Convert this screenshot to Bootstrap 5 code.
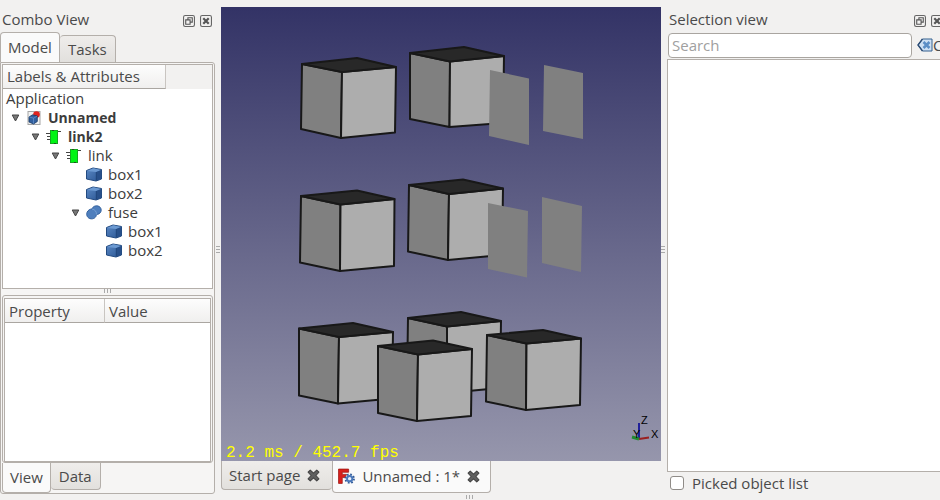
<!DOCTYPE html>
<html lang="en">
<head>
<meta charset="utf-8">
<meta name="viewport" content="width=device-width, initial-scale=1">
<title>Unnamed : 1*</title>
<link href="https://cdn.jsdelivr.net/npm/bootstrap@5.3.0/dist/css/bootstrap.min.css" rel="stylesheet">
<style>
  :root { --ink: #4a4a4a; --line: #b4afaa; --win: #f2f1f0; }
  body { background: var(--win); color: var(--ink); font-family: "Open Sans", "Noto Sans", sans-serif; font-size: 15px; line-height: 19px; }
  svg { display: block; flex: none; }
  button { color: inherit; }
  .plain-btn { border: 0; background: none; padding: 0; }
  .docks { min-height: 0; }
  .left-dock { flex: 0 0 215px; }
  .right-dock { flex: 0 0 273px; }
  .right-inner { width: 276px; }
  .dock-title { height: 32px; padding: 9px 3px 0 2px; }
  .dock-title h2 { font-size: 15px; line-height: 21px; font-weight: 400; margin: 0; }
  .dock-title .tools { gap: 5px; }
  .ui-tab { border: 1px solid var(--line); background: linear-gradient(#efedeb, #e2e0dd); padding: 0 8px; white-space: nowrap; }
  .ui-tab.on { background: #fafafa; z-index: 1; }
  .top-tab { border-radius: 4px 4px 0 0; border-bottom: 0; height: 27px; }
  .top-tab.on { height: 30px; padding: 0 7px; }
  .low-tab { border-radius: 0 0 4px 4px; border-top: 0; height: 27px; }
  .low-tab.on { height: 30px; padding: 0 7px; }
  .pane { border: 1px solid var(--line); border-radius: 0 3px 3px 3px; background: #f6f5f4; padding: 1px 0 0 1px; margin-bottom: 1px; }
  .tree-box { flex: 227 1 0; border: 1px solid var(--line); background: #fff; margin-right: 1px; }
  .head-row { height: 24px; background: #f2f1f0; }
  .head-cell { background: linear-gradient(#fdfdfd, #f0efee); border-right: 1px solid #c9c5c1; border-bottom: 1px solid #aaa6a1; padding: 2px 4px 0; font-weight: 400; }
  .tree-head { width: 163px; }
  .tree-row { height: 19px; gap: 6px; color: #3c3c3c; }
  .tree-row.fw-bold { font-size: 14px; }
  .d0 { padding-left: 3px; } .d1 { padding-left: 8px; } .d2 { padding-left: 28px; } .d3 { padding-left: 48px; }
  .d4 { padding-left: 83px; } .d4f { padding-left: 68px; } .d5 { padding-left: 103px; }
  .grip-h { height: 6px; }
  .prop-box { flex: 167 1 0; border: 1px solid var(--line); border-radius: 3px; padding: 2px 1px 0; background: #f6f5f4; margin-right: 1px; }
  .prop-fill { border: 1px solid var(--line); background: #fff; }
  .prop-fill table { width: 100%; table-layout: fixed; border-collapse: separate; border-spacing: 0; }
  .prop-fill th { height: 24px; }
  .prop-fill th:first-child { width: 100px; }
  .prop-fill th:last-child { border-right: 0; }
  .grip-v { flex: 0 0 6px; padding-top: 5px; }
  .stage { margin-top: 7px; background: linear-gradient(#333366, #9696ac); }
  .stage svg { width: 100%; height: 100%; }
  .fps { font: 16px "Liberation Mono", monospace; fill: #ffff00; }
  .axis { font: 11px "Liberation Sans", sans-serif; fill: #000; }
  .doc-tabs { height: 34px; }
  .doc-tab { height: 29px; gap: 7px; padding: 0 12px 0 7px; }
  .doc-tab.on { height: 32px; padding: 0 10px 0 5px; }
  .search { width: 244px; height: 25px; border: 1px solid #a9a5a0; border-radius: 4px; padding: 0 3px; font-size: 15px; background: #fff; color: var(--ink); }
  .search::placeholder { color: #a0a0a0; opacity: 1; }
  .search-row { height: 27px; gap: 5px; padding: 0 0 1px 1px; }
  .result { border: 1px solid var(--line); background: #fff; }
  .pick-row { height: 23px; padding: 0 0 1px 3px; gap: 8px; }
  .pick-row .form-check-input { width: 14px; height: 14px; margin: 0; border: 1px solid #908c88; border-radius: 3px; }
</style>
<script src="https://cdn.jsdelivr.net/npm/bootstrap@5.3.0/dist/js/bootstrap.bundle.min.js"></script>
</head>
<body class="vh-100 overflow-hidden d-flex flex-column">
<svg width="0" height="0" class="position-absolute" aria-hidden="true">
  <defs>
    <linearGradient id="blue" x1="0" y1="0" x2="1" y2="1"><stop offset="0" stop-color="#5a88c4"/><stop offset="1" stop-color="#2a5592"/></linearGradient>
    <symbol id="i-float" viewBox="0 0 11 11"><rect x=".5" y=".5" width="10" height="10" rx="1.5" fill="none" stroke="#666"/><path d="M4.500 4.500V2.500H8.500V6.500H6.500M2.500 4.500H6.500V8.500H2.500Z" fill="none" stroke="#555"/></symbol>
    <symbol id="i-close" viewBox="0 0 11 11"><rect x=".5" y=".5" width="10" height="10" rx="1.5" fill="none" stroke="#666"/><path d="M3 3L8 8M8 3L3 8" stroke="#555" stroke-width="2"/></symbol>
    <symbol id="i-arrow" viewBox="0 0 8 8"><path d="M.7 1H7.300L4 7Z" fill="#777" stroke="#444"/></symbol>
    <symbol id="i-doc" viewBox="0 0 15 16"><rect x="1.500" y="1.500" width="12" height="13" fill="#f1f2f2" stroke="#a5a5a5"/><circle cx="10" cy="4.500" r="3.300" fill="#e1231f"/><path d="M2.500 7L6 4.800L10.800 6V11.500L7 14L2.500 12Z" fill="#315f9e" stroke="#183963" stroke-width=".8"/><path d="M2.800 7L7 8.200L10.500 6.200M7 8.200V13.500" fill="none" stroke="#6996d1" stroke-width=".7"/></symbol>
    <symbol id="i-link" viewBox="0 0 16 16"><path d="M0 4.500H4M1 7.500H4M1 10.500H4M12 2.500H15" stroke="#444" stroke-width="1.200"/><rect x="4.500" y="1.500" width="7" height="13" fill="#00f414" stroke="#14a81e"/><path d="M6 1.500H8M10 14.500H8" stroke="#205020"/></symbol>
    <symbol id="i-box" viewBox="0 0 16 15"><path d="M.5 3.500L7 1L15.500 2.500V12L10 14L.5 12Z" fill="url(#blue)" stroke="#234a80"/><path d="M1 4L10 5L15 3L7.500 1.300Z" fill="#6c9ad2"/><path d="M10.500 5L15.300 3V11.800L10.500 13.500Z" fill="#28508a"/><path d="M10.300 5V13.500" stroke="#163a6b" stroke-width=".7"/></symbol>
    <symbol id="i-fuse" viewBox="0 0 16 15"><path d="M6 4C7 1 10 .5 12 1C15.500 2 16 6 14 8C13 9 11.500 9.500 10.500 9.500C10 13 7.500 14 5 13.800C1.500 13.500 0 10 1 7.500C2 5 4 4 6 4Z" fill="#4f7fbd" stroke="#315f9c"/><path d="M6 4C9 4.500 10.500 6.500 10.500 9.500" fill="none" stroke="#7ba5d8" stroke-width=".8"/></symbol>
    <symbol id="i-x" viewBox="0 0 12 12"><path d="M1 3L3 1L6 3.800L9 1L11 3L8.200 6L11 9L9 11L6 8.200L3 11L1 9L3.800 6Z" fill="#606060" stroke="#444" stroke-linejoin="round"/></symbol>
    <symbol id="i-app" viewBox="0 0 16 16"><path d="M.5 1H10V4H4V6H8V9H4V14.500H.5Z" fill="#d8201c" stroke="#9d1512" stroke-width=".7"/><circle cx="11" cy="10" r="4.200" fill="#f6f5f4"/><circle cx="11" cy="10" r="4" fill="none" stroke="#2f5896" stroke-width="1.800" stroke-dasharray="1.600 1.540"/><circle cx="11" cy="10" r="2.500" fill="#e6eefb" stroke="#4a78ba" stroke-width="1.800"/></symbol>
    <symbol id="i-clear" viewBox="0 0 16 14"><path d="M5.500 1H15V13H5.500L1 7Z" fill="#cfe0f3" stroke="#35608f"/><path d="M5.500 1L1 7L5.500 13" fill="none" stroke="#2c4c75" stroke-width="1.400"/><path d="M6.500 4L12.500 10M12.500 4L6.500 10" stroke="#5c8ec6" stroke-width="2.600"/></symbol>
    <symbol id="i-gripx" viewBox="0 0 8 5"><path d="M.5 0V4M3.500 0V4M6.500 0V4" stroke="#aaa"/></symbol>
    <symbol id="i-gripy" viewBox="0 0 5 8"><path d="M0 .5H4M0 3.500H4M0 6.500H4" stroke="#aaa"/></symbol>
  </defs>
</svg>

<div class="docks d-flex flex-grow-1 overflow-hidden">
  <aside class="left-dock d-flex flex-column">
    <header class="dock-title d-flex justify-content-between">
      <h2>Combo View</h2>
      <div class="tools d-flex align-items-center">
        <button class="plain-btn" aria-label="Float"><svg width="12" height="12"><use href="#i-float"/></svg></button>
        <button class="plain-btn" aria-label="Close"><svg width="12" height="12"><use href="#i-close"/></svg></button>
      </div>
    </header>
    <div class="d-flex align-items-end" role="tablist">
      <button class="ui-tab top-tab on" role="tab" aria-selected="true">Model</button>
      <button class="ui-tab top-tab border-start-0" role="tab" aria-selected="false">Tasks</button>
    </div>
    <div class="pane d-flex flex-column flex-grow-1">
      <section class="tree-box">
        <div class="head-row d-flex"><div class="head-cell tree-head">Labels &amp; Attributes</div></div>
        <div role="tree">
          <div class="tree-row d0" role="treeitem">Application</div>
          <div class="tree-row d1 d-flex align-items-center fw-bold" role="treeitem"><svg width="9" height="8"><use href="#i-arrow"/></svg><svg width="16" height="16"><use href="#i-doc"/></svg>Unnamed</div>
          <div class="tree-row d2 d-flex align-items-center fw-bold" role="treeitem"><svg width="9" height="8"><use href="#i-arrow"/></svg><svg width="16" height="16"><use href="#i-link"/></svg>link2</div>
          <div class="tree-row d3 d-flex align-items-center" role="treeitem"><svg width="9" height="8"><use href="#i-arrow"/></svg><svg width="16" height="16"><use href="#i-link"/></svg>link</div>
          <div class="tree-row d4 d-flex align-items-center" role="treeitem"><svg width="16" height="15"><use href="#i-box"/></svg>box1</div>
          <div class="tree-row d4 d-flex align-items-center" role="treeitem"><svg width="16" height="15"><use href="#i-box"/></svg>box2</div>
          <div class="tree-row d4f d-flex align-items-center" role="treeitem"><svg width="9" height="8"><use href="#i-arrow"/></svg><svg width="16" height="15"><use href="#i-fuse"/></svg>fuse</div>
          <div class="tree-row d5 d-flex align-items-center" role="treeitem"><svg width="16" height="15"><use href="#i-box"/></svg>box1</div>
          <div class="tree-row d5 d-flex align-items-center" role="treeitem"><svg width="16" height="15"><use href="#i-box"/></svg>box2</div>
        </div>
      </section>
      <div class="grip-h d-flex justify-content-center align-items-center"><svg width="8" height="5"><use href="#i-gripx"/></svg></div>
      <section class="prop-box d-flex flex-column">
        <div class="prop-fill flex-grow-1">
          <table><thead><tr><th class="head-cell">Property</th><th class="head-cell">Value</th></tr></thead></table>
        </div>
      </section>
      <div class="d-flex align-items-start" role="tablist">
        <button class="ui-tab low-tab on" role="tab" aria-selected="true">View</button>
        <button class="ui-tab low-tab border-start-0" role="tab" aria-selected="false">Data</button>
      </div>
    </div>
  </aside>

  <div class="grip-v d-flex align-items-center justify-content-center"><svg width="5" height="8"><use href="#i-gripy"/></svg></div>

  <main class="d-flex flex-column flex-grow-1 overflow-hidden">
    <div class="stage flex-grow-1 overflow-hidden">
      <svg viewBox="221 7 440 454" role="img" aria-label="3D view">
        <g stroke="#181818" stroke-width="2" stroke-linejoin="round">
          <g>
            <path fill="#808080" d="M410 53L450 61.500L449.500 127L410 119Z"/><path fill="#adadad" d="M450 61.500L504 56L503 123L449.500 127Z"/><path fill="#282828" d="M410 53L464 47L504 56L450 61.500Z"/>
            <path fill="#808080" d="M302 64L342 72L341 138L301 129Z"/><path fill="#adadad" d="M342 72L396 67L395 132.500L341 138Z"/><path fill="#282828" d="M302 64L357 58L396 67L342 72Z"/>
          </g>
          <g>
            <path fill="#808080" d="M409 185L449 194L448 260L408 251.500Z"/><path fill="#adadad" d="M449 194L503 188.500L502 255L448 260Z"/><path fill="#282828" d="M409 185L463 179.500L503 188.500L449 194Z"/>
            <path fill="#808080" d="M301 196L340.500 204.500L340 271L300 262.500Z"/><path fill="#adadad" d="M340.500 204.500L394.500 199L394 266L340 271Z"/><path fill="#282828" d="M301 196L357 190.500L394.500 199L340.500 204.500Z"/>
          </g>
          <g>
            <path fill="#808080" d="M408 318L447 326.500L447 393L407 384Z"/><path fill="#adadad" d="M447 326.500L501 321L500 388L447 393Z"/><path fill="#282828" d="M408 318L461 312L501 321L447 326.500Z"/>
            <path fill="#808080" d="M299 328.500L339 337L338 403.500L299 395.500Z"/><path fill="#adadad" d="M339 337L393 332L392 398.500L338 403.500Z"/><path fill="#282828" d="M299 328.500L353 323L393 332L339 337Z"/>
            <path fill="#808080" d="M487 335L526.500 343.500L526 410L486 401.500Z"/><path fill="#adadad" d="M526.500 343.500L581 338.500L580 405L526 410Z"/><path fill="#282828" d="M487 335L543 330L581 338.500L526.500 343.500Z"/>
            <path fill="#808080" d="M378 346L418 354.500L417 421L378 413Z"/><path fill="#adadad" d="M418 354.500L472 349L471 416L417 421Z"/><path fill="#282828" d="M378 346L433 340.500L472 349L418 354.500Z"/>
          </g>
        </g>
        <path fill="#808080" d="M490 70L529 78.500V145L489 136ZM544 65L583 73V139L543 131ZM488 203L528 211L527 277.500L488 269ZM542 197L582 206L581 272L542 263Z"/>
        <path d="M639 438V423" stroke="#20209a" stroke-width="2"/><path d="M639 439L649 437.500" stroke="#9a2020" stroke-width="2"/><path d="M632 437L639 439" stroke="#208a30" stroke-width="3"/>
        <text class="axis" x="641" y="424">Z</text><text class="axis" x="633" y="438">Y</text><text class="axis" x="651" y="438">X</text>
        <text class="fps" x="226" y="457">2.2 ms / 452.7 fps</text>
      </svg>
    </div>
    <div class="doc-tabs d-flex align-items-start" role="tablist">
      <div class="ui-tab low-tab doc-tab border-end-0 d-flex align-items-center"><button class="plain-btn" role="tab">Start page</button><button class="plain-btn" aria-label="Close Start page"><svg width="13" height="13"><use href="#i-x"/></svg></button></div>
      <div class="ui-tab low-tab doc-tab on d-flex align-items-center"><svg width="17" height="17"><use href="#i-app"/></svg><button class="plain-btn" role="tab">Unnamed : 1*</button><button class="plain-btn" aria-label="Close Unnamed"><svg width="13" height="13"><use href="#i-x"/></svg></button></div>
    </div>
  </main>

  <div class="grip-v d-flex align-items-center"><svg width="5" height="8"><use href="#i-gripy"/></svg></div>

  <aside class="right-dock overflow-hidden">
    <div class="right-inner h-100 d-flex flex-column">
      <header class="dock-title d-flex justify-content-between pe-0">
        <h2>Selection view</h2>
        <div class="tools d-flex align-items-center">
          <button class="plain-btn" aria-label="Float"><svg width="12" height="12"><use href="#i-float"/></svg></button>
          <button class="plain-btn" aria-label="Close"><svg width="12" height="12"><use href="#i-close"/></svg></button>
        </div>
      </header>
      <div class="search-row d-flex align-items-center">
        <input class="search flex-shrink-0" type="text" placeholder="Search" aria-label="Search">
        <button class="plain-btn d-flex align-items-center"><svg width="16" height="14" class="me-0"><use href="#i-clear"/></svg><span>Clear</span></button>
      </div>
      <div class="result flex-grow-1"></div>
      <div class="pick-row d-flex align-items-center"><input class="form-check-input" type="checkbox" id="picked"><label for="picked">Picked object list</label></div>
    </div>
  </aside>
</div>
<div class="d-flex justify-content-center"><svg width="8" height="5"><use href="#i-gripx"/></svg></div>
</body>
</html>
